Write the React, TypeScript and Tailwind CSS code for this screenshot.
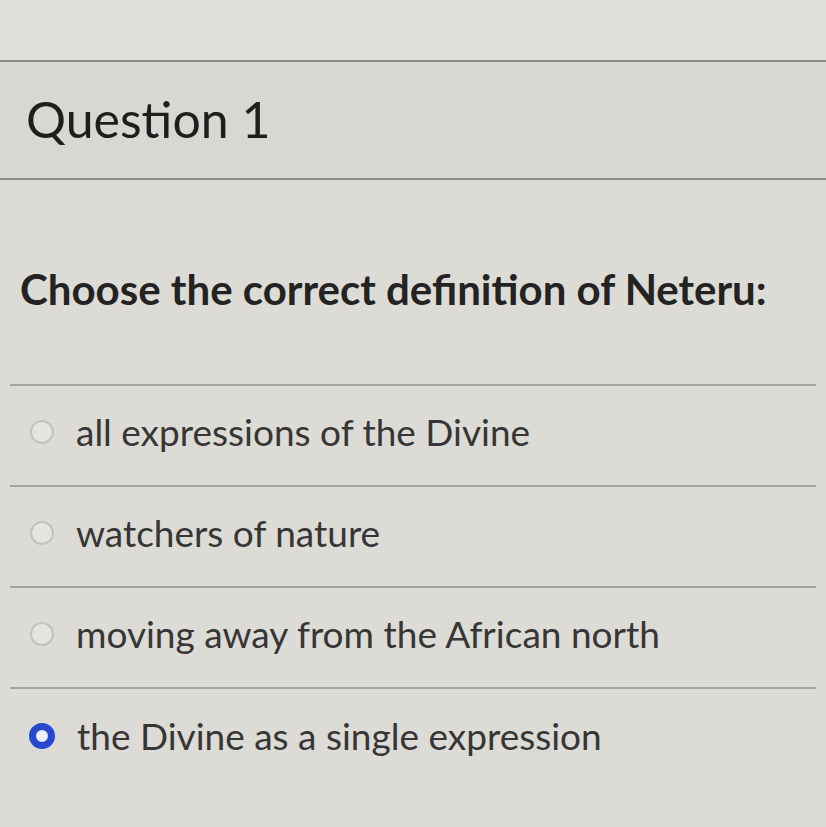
import React, { useState } from 'react';

const options = [
  'all expressions of the Divine',
  'watchers of nature',
  'moving away from the African north',
  'the Divine as a single expression',
];

export default function App() {
  const [selected, setSelected] = useState(3);

  return (
    <div
      className="w-[826px] h-[827px] overflow-hidden bg-[#dddbd6] text-[#2a2a2a]"
      style={{ fontFamily: 'Lato, "Open Sans", sans-serif' }}
    >
      <div className="h-[60px] bg-[#e1dfdb]" />
      <div className="h-[120px] border-y-2 border-[#8e8c88] bg-[#d9d7d2] flex items-center pl-[26px]">
        <h2 className="text-[50px] leading-none text-[#1e1e1e] pb-[2px]">Question 1</h2>
      </div>

      <div className="pt-[88px] pl-[20px] pb-[74px]">
        <p className="text-[42px] font-bold leading-none text-[#232323]">
          Choose the correct definition of Neteru:
        </p>
      </div>

      <div className="mx-[10px] border-t-2 border-[#a6a4a0]">
        {options.map((label, i) => (
          <label
            key={label}
            className={`flex items-center gap-[22px] h-[101px] pl-[20px] pb-[8px] cursor-pointer ${
              i < options.length - 1 ? 'border-b-2 border-[#a6a4a0]' : ''
            }`}
          >
            <input
              type="radio"
              name="q1"
              checked={selected === i}
              onChange={() => setSelected(i)}
              className="sr-only"
            />
            {selected === i ? (
              <span className="w-[26px] h-[26px] -ml-[1px] rounded-full border-[7px] border-[#2849cf] bg-[#eef0fa]" />
            ) : (
              <span className="w-[24px] h-[24px] rounded-full border-2 border-[#c4c2be] bg-[#e6e4e0]" />
            )}
            <span className="text-[37px] leading-none text-[#363636]">{label}</span>
          </label>
        ))}
      </div>
    </div>
  );
}
